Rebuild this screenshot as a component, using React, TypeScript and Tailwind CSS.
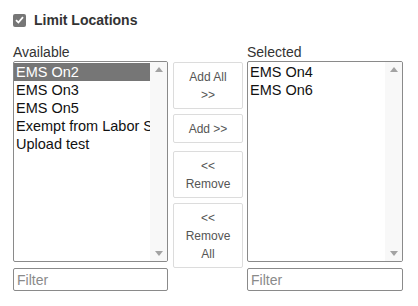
import React from 'react';

const font = { fontFamily: '"Liberation Sans", Arial, sans-serif' };

function Listbox({ items, selected }: { items: string[]; selected?: number }) {
  return (
    <div className="flex h-[201px] w-full overflow-hidden rounded-[2px] border border-[#8a8a8a] bg-white">
      <div className="min-w-0 flex-1 pt-px">
        {items.map((it, i) => (
          <div
            key={it}
            className={`overflow-hidden whitespace-nowrap pl-[2px] text-[14.5px] leading-[18px] ${i === selected ? 'bg-[#767676] text-white' : 'text-[#111]'}`}
          >
            {it}
          </div>
        ))}
      </div>
      <div className="flex w-[17px] flex-col items-center justify-between bg-[#f8f8f8] py-[5px]">
        <svg width="8" height="5" viewBox="0 0 8 5">
          <path d="M0 5 L4 0 L8 5 Z" fill="#a3a3a3" />
        </svg>
        <svg width="8" height="5" viewBox="0 0 8 5">
          <path d="M0 0 L8 0 L4 5 Z" fill="#a3a3a3" />
        </svg>
      </div>
    </div>
  );
}

function FilterInput() {
  return (
    <input
      placeholder="Filter"
      className="mt-[6px] h-[23px] w-full rounded-[2px] border border-[#8a8a8a] px-[3px] text-[14px] text-[#333] placeholder:text-[#8a8a8a] outline-none"
      style={font}
    />
  );
}

function Btn({ lines, className = '' }: { lines: string[]; className?: string }) {
  return (
    <button
      className={`w-full rounded-[2px] border border-[#dcdcdc] bg-white py-[4.5px] text-center text-[12px] leading-[18px] text-[#555] ${className}`}
      style={font}
    >
      {lines.map((l) => (
        <div key={l}>{l}</div>
      ))}
    </button>
  );
}

export default function App() {
  return (
    <div className="min-h-screen bg-white pl-[13px] pt-[12px]" style={font}>
      <div className="flex items-center gap-[8px] leading-[16px]">
        <div className="flex h-[13px] w-[13px] items-center justify-center rounded-[2px] bg-[#767676]">
          <svg width="9" height="8" viewBox="0 0 9 8">
            <path d="M1 4.2 L3.4 6.5 L8 1.2" stroke="white" strokeWidth="1.8" fill="none" />
          </svg>
        </div>
        <span className="text-[14px] font-bold text-[#333]">Limit Locations</span>
      </div>

      <div className="mt-[16px] flex items-start">
        <div className="w-[155px]">
          <div className="text-[14px] leading-[17px] text-[#333]">Available</div>
          <Listbox items={['EMS On2', 'EMS On3', 'EMS On5', 'Exempt from Labor Scheduling', 'Upload test']} selected={0} />
          <FilterInput />
        </div>

        <div className="ml-[5px] mt-[18px] flex w-[70px] flex-col">
          <Btn lines={['Add All', '>>']} />
          <Btn lines={['Add >>']} className="mt-[5px]" />
          <Btn lines={['<<', 'Remove']} className="mt-[8px]" />
          <Btn lines={['<<', 'Remove', 'All']} className="mt-[5px]" />
        </div>

        <div className="ml-[4px] w-[156px]">
          <div className="text-[14px] leading-[17px] text-[#333]">Selected</div>
          <Listbox items={['EMS On4', 'EMS On6']} />
          <FilterInput />
        </div>
      </div>
    </div>
  );
}
